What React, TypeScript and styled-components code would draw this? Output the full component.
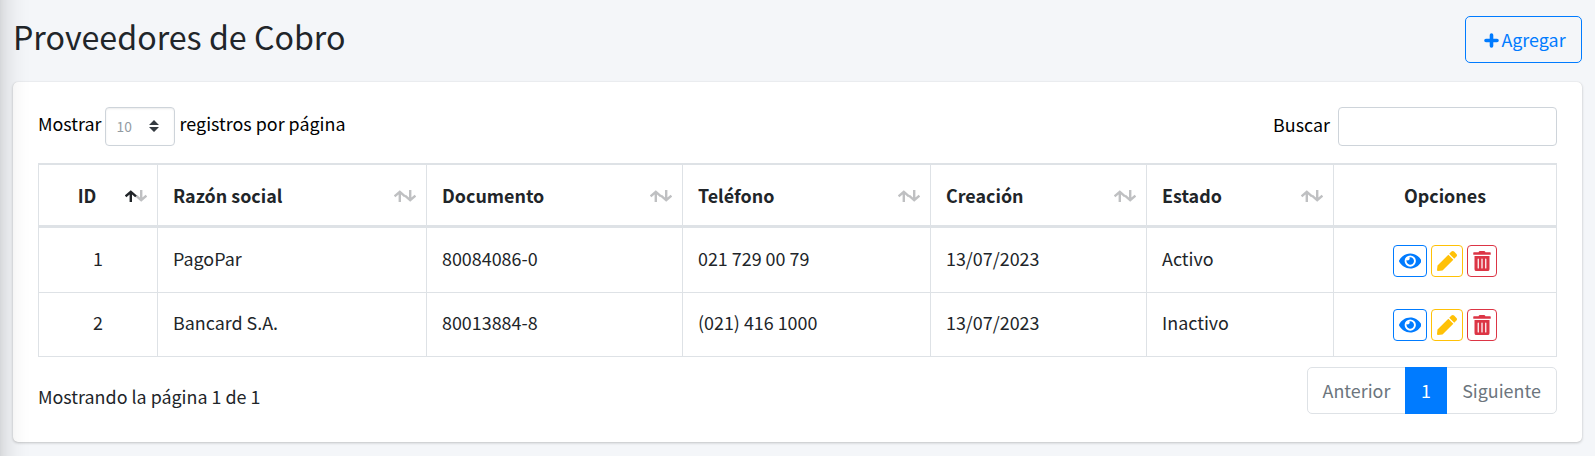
import React from 'react';
import styled, { createGlobalStyle } from 'styled-components';
import { FaEye, FaPen, FaTrashAlt } from 'react-icons/fa';

const GlobalStyle = createGlobalStyle`
  *, *::before, *::after { box-sizing: border-box; }
  body {
    margin: 0;
    background: #f4f6f9;
    color: #212529;
    font-family: 'Noto Sans CJK SC', 'Noto Sans', sans-serif;
    font-size: 17.9px;
    line-height: 30px;
  }
`;

const Page = styled.main`
  position: relative;
  height: 456px;
  overflow: hidden;
  padding: 16px 13px 0;
`;

const SidebarShadow = styled.div`
  position: absolute;
  top: -60px;
  bottom: -60px;
  left: -254px;
  width: 250px;
  pointer-events: none;
  box-shadow: 0 0 28px 4px rgba(0, 0, 0, 0.2), 0 0 10px rgba(0, 0, 0, 0.12);
`;

const Header = styled.header`
  display: flex;
  justify-content: space-between;
  align-items: flex-start;
  height: 66px;
`;

const Title = styled.h1`
  margin: 0;
  font-size: 32.2px;
  font-weight: 400;
  line-height: 41px;
`;

const AddButton = styled.button`
  display: flex;
  align-items: center;
  justify-content: center;
  gap: 2px;
  width: 117px;
  height: 47px;
  padding: 0 0 2px 3px;
  border: 1px solid #007bff;
  border-radius: 5px;
  background: transparent;
  color: #007bff;
  font: inherit;

  svg {
    position: relative;
    top: 1.5px;
  }
`;

const Card = styled.section`
  height: 360px;
  padding: 25px;
  border-radius: 5px;
  background: #fff;
  box-shadow: 0 0 1px rgba(0, 0, 0, 0.125), 0 1px 3px rgba(0, 0, 0, 0.2);
`;

const Controls = styled.div`
  display: flex;
  justify-content: space-between;
  height: 56px;
  color: #000;
`;

const Control = styled.div`
  display: flex;
  align-items: flex-start;
  height: 39px;
`;

const ControlText = styled.label<{ $offset: number }>`
  padding-top: ${(p) => p.$offset}px;
`;

const LengthBox = styled.span`
  display: flex;
  align-items: center;
  justify-content: space-between;
  width: 70px;
  height: 39px;
  margin: 0 5px 0 3px;
  padding: 0 15px 1px 11px;
  border: 1px solid #ced4da;
  border-radius: 4px;
  box-shadow: inset 0 1px 2px rgba(0, 0, 0, 0.075);
  color: #939ba2;
  font-size: 13.8px;
`;

const SearchInput = styled.input`
  width: 219px;
  height: 39px;
  margin-left: 8px;
  border: 1px solid #ced4da;
  border-radius: 4px;
  background: #fff;
  font: inherit;
`;

const Table = styled.table`
  width: 1519px;
  table-layout: fixed;
  border-collapse: separate;
  border-spacing: 0;
  border-right: 1px solid #dee2e6;
`;

const HeadCell = styled.th<{ $center?: boolean }>`
  height: 65px;
  padding: ${(p) => (p.$center ? '0 15px' : '0 10px 0 15px')};
  border: solid #dee2e6;
  border-width: 2px 0 3px 1px;
  text-align: left;
  font-weight: 700;
`;

const HeadContent = styled.div<{ $center?: boolean }>`
  display: flex;
  align-items: center;
  justify-content: ${(p) => (p.$center ? 'center' : 'space-between')};

  svg {
    flex: none;
    margin-top: 1px;
  }
`;

const IdLabel = styled.span`
  flex: 1;
  padding-right: 5px;
  text-align: center;
`;

const Row = styled.tr<{ $height: number }>`
  height: ${(p) => p.$height}px;
`;

const Cell = styled.td<{ $center?: boolean; $lift?: number }>`
  padding: 0 15px ${(p) => p.$lift ?? 0}px;
  border: solid #dee2e6;
  border-width: 0 0 1px 1px;
  text-align: ${(p) => (p.$center ? 'center' : 'left')};
`;

const Actions = styled.div`
  display: flex;
  justify-content: center;
  gap: 4px;
  padding-top: 1px;
`;

const ActionButton = styled.button<{ $color: string; $width: number }>`
  display: flex;
  align-items: center;
  justify-content: center;
  width: ${(p) => p.$width}px;
  height: 32px;
  padding: 0;
  border: 1px solid ${(p) => p.$color};
  border-radius: 4px;
  background: transparent;
  color: ${(p) => p.$color};
`;

const Footer = styled.footer`
  display: flex;
  justify-content: space-between;
  padding-top: 10px;
`;

const Info = styled.div`
  padding-top: 14px;
`;

const Pagination = styled.nav`
  display: flex;
  height: 47px;
  border: 1px solid #dee2e6;
  border-radius: 5px;
`;

const PageLink = styled.button<{ $active?: boolean; $width: number }>`
  width: ${(p) => p.$width}px;
  height: 47px;
  margin-top: -1px;
  padding: 0 0 2px;
  border: 0;
  background: ${(p) => (p.$active ? '#007bff' : 'transparent')};
  color: ${(p) => (p.$active ? '#fff' : '#6c757d')};
  font: inherit;
`;

const PlusIcon = () => (
  <svg width="15" height="15" viewBox="0 0 15 15" stroke="currentColor">
    <path d="M7.5 2v11M2 7.5h11" strokeWidth="3.6" strokeLinecap="round" />
  </svg>
);

const SortIcon = ({ ascending = false }: { ascending?: boolean }) => (
  <svg width="22" height="14" viewBox="0 0 22 14" fill="none" strokeWidth="2.4">
    <path d="M16.2 1v10M11 6.6l5.2 4.6 5.2-4.6" stroke="#bfc0c2" />
    <path
      d="M5.8 13V3M.6 7.4l5.2-4.6L11 7.4"
      stroke={ascending ? '#212529' : '#bfc0c2'}
    />
  </svg>
);

const SelectArrows = () => (
  <svg width="10" height="12" viewBox="0 0 10 12" fill="#343a40">
    <path d="M0 5 5 0l5 5zM0 7l5 5 5-5z" />
  </svg>
);

const columns = [
  { label: 'ID', width: 119 },
  { label: 'Razón social', width: 269 },
  { label: 'Documento', width: 256 },
  { label: 'Teléfono', width: 248 },
  { label: 'Creación', width: 216 },
  { label: 'Estado', width: 187 },
  { label: 'Opciones', width: 223 },
];

const providers = [
  ['1', 'PagoPar', '80084086-0', '021 729 00 79', '13/07/2023', 'Activo'],
  ['2', 'Bancard S.A.', '80013884-8', '(021) 416 1000', '13/07/2023', 'Inactivo'],
];

export default function App() {
  return (
    <>
      <GlobalStyle />
      <Page>
        <Header>
          <Title>Proveedores de Cobro</Title>
          <AddButton>
            <PlusIcon />
            Agregar
          </AddButton>
        </Header>
        <Card>
          <Controls>
            <Control>
              <ControlText $offset={1}>Mostrar</ControlText>
              <LengthBox>
                10
                <SelectArrows />
              </LengthBox>
              <ControlText $offset={1}>registros por página</ControlText>
            </Control>
            <Control>
              <ControlText $offset={2} htmlFor="buscar">
                Buscar
              </ControlText>
              <SearchInput id="buscar" />
            </Control>
          </Controls>
          <Table>
            <colgroup>
              {columns.map((c) => (
                <col key={c.label} width={c.width} />
              ))}
            </colgroup>
            <thead>
              <tr>
                {columns.map((c, i) => (
                  <HeadCell key={c.label} $center={i === 6}>
                    <HeadContent $center={i === 6}>
                      {i === 0 ? <IdLabel>{c.label}</IdLabel> : c.label}
                      {i < 6 && <SortIcon ascending={i === 0} />}
                    </HeadContent>
                  </HeadCell>
                ))}
              </tr>
            </thead>
            <tbody>
              {providers.map((row, r) => (
                <Row key={row[0]} $height={r === 0 ? 65 : 64}>
                  {row.map((value, i) => (
                    <Cell key={i} $center={i === 0} $lift={r === 0 ? 4 : 5}>
                      {value}
                    </Cell>
                  ))}
                  <Cell $center>
                    <Actions>
                      <ActionButton $color="#007bff" $width={34} aria-label="Ver">
                        <FaEye style={{ width: 22.5, height: 20 }} />
                      </ActionButton>
                      <ActionButton $color="#ffc107" $width={32} aria-label="Editar">
                        <FaPen size={20} />
                      </ActionButton>
                      <ActionButton $color="#dc3545" $width={30} aria-label="Eliminar">
                        <FaTrashAlt size={20} />
                      </ActionButton>
                    </Actions>
                  </Cell>
                </Row>
              ))}
            </tbody>
          </Table>
          <Footer>
            <Info>Mostrando la página 1 de 1</Info>
            <Pagination>
              <PageLink $width={97}>Anterior</PageLink>
              <PageLink $width={42} $active>
                1
              </PageLink>
              <PageLink $width={109}>Siguiente</PageLink>
            </Pagination>
          </Footer>
        </Card>
        <SidebarShadow />
      </Page>
    </>
  );
}
